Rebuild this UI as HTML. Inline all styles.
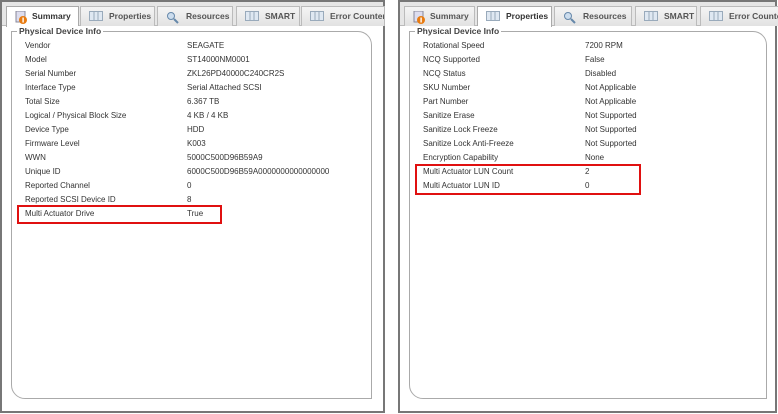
<!DOCTYPE html>
<html><head><meta charset="utf-8"><style>
*{margin:0;padding:0;box-sizing:border-box}
body{width:778px;height:414px;background:#fff;position:relative;overflow:hidden;font-family:"Liberation Sans",Arial,sans-serif;font-size:8px;color:#333}
.panel{position:absolute;top:0;height:413px;border:2px solid #777;background:#fff}
.bar{position:absolute;left:0;right:0;top:0;height:24px;background:#e6e6e6;border-bottom:1px solid #bbb}
.tab{position:absolute;top:4px;height:20px;border:1px solid #bbb;border-bottom:none;background:linear-gradient(#f4f4f4,#e2e2e2);font-weight:bold;font-size:8.5px;color:#555;line-height:19px;white-space:nowrap;overflow:hidden}
.tab.act{background:#fff;color:#333;height:21px;border-color:#aaa}
.tab svg{position:absolute;left:8px;top:4px}
.tab span{position:absolute;left:28px}
.fs{position:absolute;border:1px solid #aaa;border-top-right-radius:14px;border-bottom-left-radius:14px}
.legend{position:absolute;top:-6px;left:5px;background:#fff;padding:0 2px;font-weight:bold;font-size:8.5px;color:#444}
.r{position:absolute;white-space:nowrap}
.red{position:absolute;border:2px solid #e01010}
</style></head><body>

<div class="panel" style="left:0;width:385px">
 <div class="bar"></div>
 <div class="tab act" style="left:4px;width:73px"><svg width="14" height="13"><rect x="1" y="0" width="9" height="11" fill="#dde" stroke="#889"/><circle cx="8" cy="9" r="4" fill="#e87b10"/><rect x="7.4" y="6.5" width="1.4" height="5" fill="#fff"/></svg><span style="left:25px">Summary</span></div>
 <div class="tab" style="left:78px;width:75px"><svg width="14" height="10"><rect x="0.5" y="0.5" width="13" height="9" fill="#dfe8f2" stroke="#9ab"/><line x1="5" y1="1" x2="5" y2="9" stroke="#9ab"/><line x1="9" y1="1" x2="9" y2="9" stroke="#9ab"/></svg><span>Properties</span></div>
 <div class="tab" style="left:155px;width:76px"><svg width="14" height="13"><circle cx="5" cy="5" r="3.5" fill="#cde" stroke="#68a"/><line x1="8" y1="8" x2="12" y2="12" stroke="#68a" stroke-width="2"/></svg><span>Resources</span></div>
 <div class="tab" style="left:234px;width:64px"><svg width="14" height="10"><rect x="0.5" y="0.5" width="13" height="9" fill="#dfe8f2" stroke="#9ab"/><line x1="5" y1="1" x2="5" y2="9" stroke="#9ab"/><line x1="9" y1="1" x2="9" y2="9" stroke="#9ab"/></svg><span>SMART</span></div>
 <div class="tab" style="left:299px;width:84px"><svg width="14" height="10"><rect x="0.5" y="0.5" width="13" height="9" fill="#dfe8f2" stroke="#9ab"/><line x1="5" y1="1" x2="5" y2="9" stroke="#9ab"/><line x1="9" y1="1" x2="9" y2="9" stroke="#9ab"/></svg><span>Error Counter</span></div>
 <div class="fs" style="left:9px;top:29px;width:361px;height:368px"><div class="legend">Physical Device Info</div></div>
</div>

<div class="panel" style="left:398px;width:379px">
 <div class="bar"></div>
 <div class="tab" style="left:4px;width:71px"><svg width="14" height="13"><rect x="1" y="0" width="9" height="11" fill="#dde" stroke="#889"/><circle cx="8" cy="9" r="4" fill="#e87b10"/><rect x="7.4" y="6.5" width="1.4" height="5" fill="#fff"/></svg><span style="left:25px">Summary</span></div>
 <div class="tab act" style="left:77px;width:75px"><svg width="14" height="10"><rect x="0.5" y="0.5" width="13" height="9" fill="#dfe8f2" stroke="#9ab"/><line x1="5" y1="1" x2="5" y2="9" stroke="#9ab"/><line x1="9" y1="1" x2="9" y2="9" stroke="#9ab"/></svg><span>Properties</span></div>
 <div class="tab" style="left:154px;width:78px"><svg width="14" height="13"><circle cx="5" cy="5" r="3.5" fill="#cde" stroke="#68a"/><line x1="8" y1="8" x2="12" y2="12" stroke="#68a" stroke-width="2"/></svg><span>Resources</span></div>
 <div class="tab" style="left:235px;width:62px"><svg width="14" height="10"><rect x="0.5" y="0.5" width="13" height="9" fill="#dfe8f2" stroke="#9ab"/><line x1="5" y1="1" x2="5" y2="9" stroke="#9ab"/><line x1="9" y1="1" x2="9" y2="9" stroke="#9ab"/></svg><span>SMART</span></div>
 <div class="tab" style="left:300px;width:80px"><svg width="14" height="10"><rect x="0.5" y="0.5" width="13" height="9" fill="#dfe8f2" stroke="#9ab"/><line x1="5" y1="1" x2="5" y2="9" stroke="#9ab"/><line x1="9" y1="1" x2="9" y2="9" stroke="#9ab"/></svg><span>Error Counter</span></div>
 <div class="fs" style="left:9px;top:29px;width:358px;height:368px"><div class="legend">Physical Device Info</div></div>
</div>

<div class="r" style="left:25px;top:41px">Vendor</div><div class="r" style="left:187px;top:41px">SEAGATE</div>
<div class="r" style="left:25px;top:55px">Model</div><div class="r" style="left:187px;top:55px">ST14000NM0001</div>
<div class="r" style="left:25px;top:69px">Serial Number</div><div class="r" style="left:187px;top:69px">ZKL26PD40000C240CR2S</div>
<div class="r" style="left:25px;top:83px">Interface Type</div><div class="r" style="left:187px;top:83px">Serial Attached SCSI</div>
<div class="r" style="left:25px;top:97px">Total Size</div><div class="r" style="left:187px;top:97px">6.367 TB</div>
<div class="r" style="left:25px;top:111px">Logical / Physical Block Size</div><div class="r" style="left:187px;top:111px">4 KB / 4 KB</div>
<div class="r" style="left:25px;top:125px">Device Type</div><div class="r" style="left:187px;top:125px">HDD</div>
<div class="r" style="left:25px;top:139px">Firmware Level</div><div class="r" style="left:187px;top:139px">K003</div>
<div class="r" style="left:25px;top:153px">WWN</div><div class="r" style="left:187px;top:153px">5000C500D96B59A9</div>
<div class="r" style="left:25px;top:167px">Unique ID</div><div class="r" style="left:187px;top:167px">6000C500D96B59A0000000000000000</div>
<div class="r" style="left:25px;top:181px">Reported Channel</div><div class="r" style="left:187px;top:181px">0</div>
<div class="r" style="left:25px;top:195px">Reported SCSI Device ID</div><div class="r" style="left:187px;top:195px">8</div>
<div class="r" style="left:25px;top:209px">Multi Actuator Drive</div><div class="r" style="left:187px;top:209px">True</div>
<div class="red" style="left:17px;top:205px;width:205px;height:19px"></div>

<div class="r" style="left:423px;top:41px">Rotational Speed</div><div class="r" style="left:585px;top:41px">7200 RPM</div>
<div class="r" style="left:423px;top:55px">NCQ Supported</div><div class="r" style="left:585px;top:55px">False</div>
<div class="r" style="left:423px;top:69px">NCQ Status</div><div class="r" style="left:585px;top:69px">Disabled</div>
<div class="r" style="left:423px;top:83px">SKU Number</div><div class="r" style="left:585px;top:83px">Not Applicable</div>
<div class="r" style="left:423px;top:97px">Part Number</div><div class="r" style="left:585px;top:97px">Not Applicable</div>
<div class="r" style="left:423px;top:111px">Sanitize Erase</div><div class="r" style="left:585px;top:111px">Not Supported</div>
<div class="r" style="left:423px;top:125px">Sanitize Lock Freeze</div><div class="r" style="left:585px;top:125px">Not Supported</div>
<div class="r" style="left:423px;top:139px">Sanitize Lock Anti-Freeze</div><div class="r" style="left:585px;top:139px">Not Supported</div>
<div class="r" style="left:423px;top:153px">Encryption Capability</div><div class="r" style="left:585px;top:153px">None</div>
<div class="r" style="left:423px;top:167px">Multi Actuator LUN Count</div><div class="r" style="left:585px;top:167px">2</div>
<div class="r" style="left:423px;top:181px">Multi Actuator LUN ID</div><div class="r" style="left:585px;top:181px">0</div>
<div class="red" style="left:415px;top:164px;width:226px;height:31px"></div>
</body></html>
